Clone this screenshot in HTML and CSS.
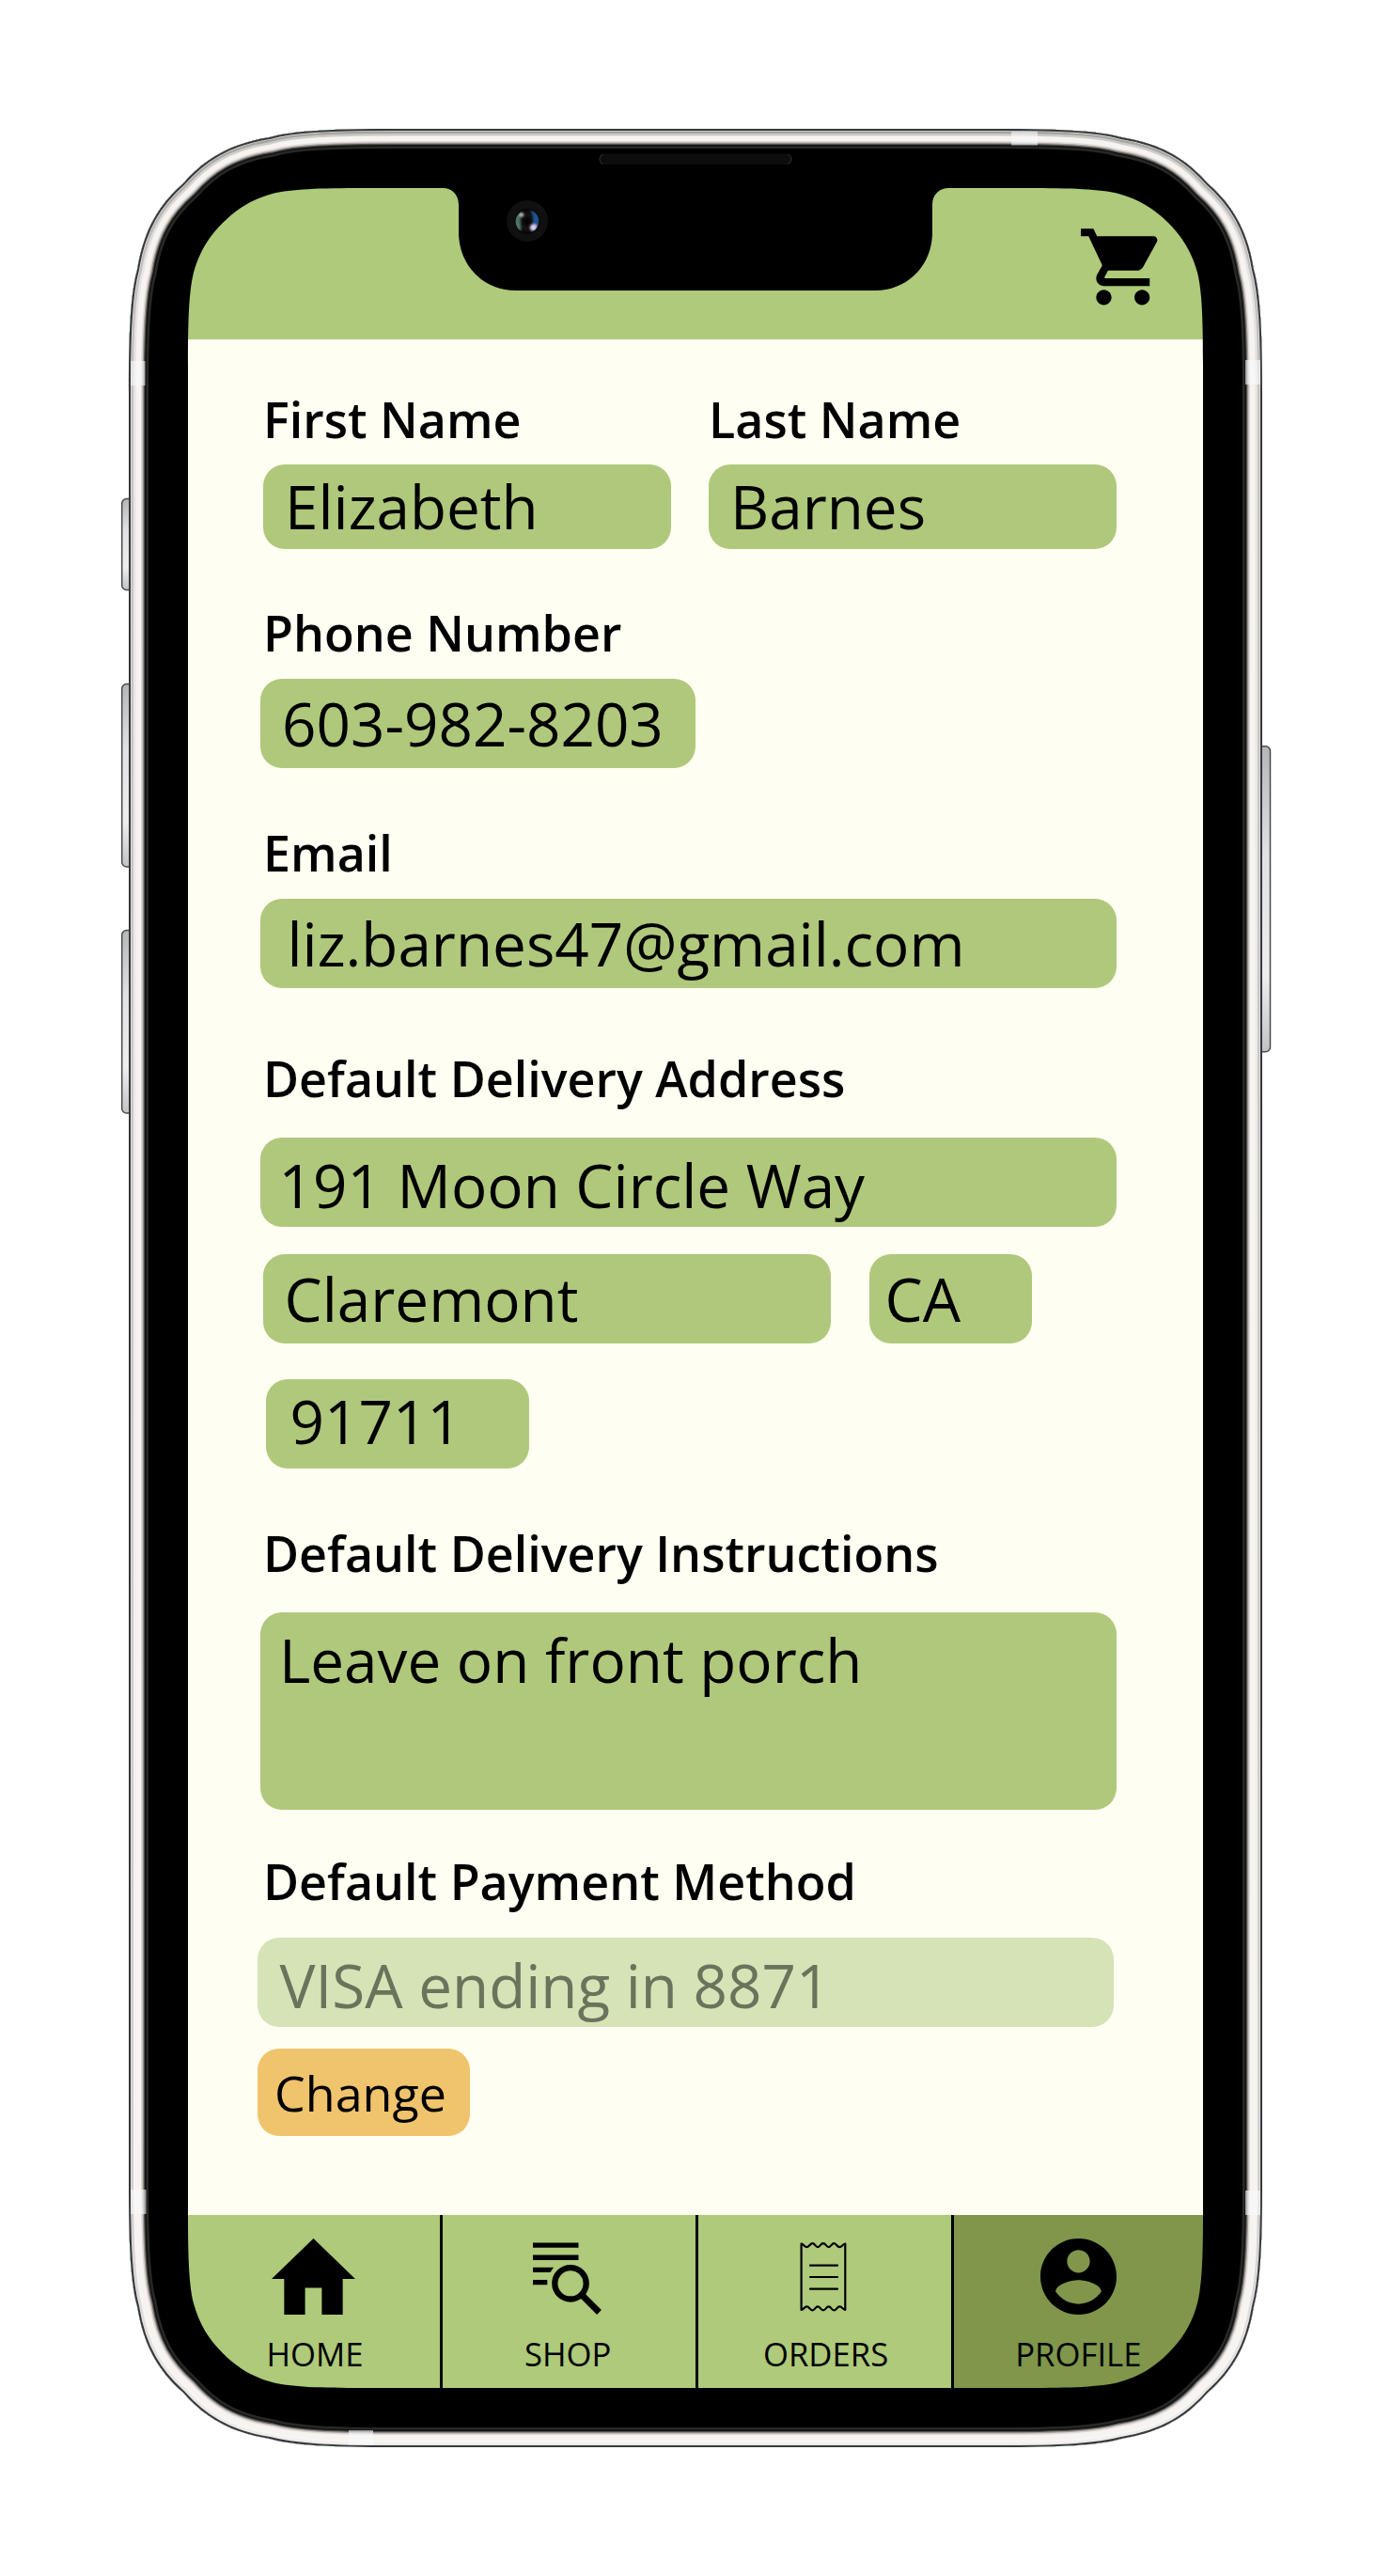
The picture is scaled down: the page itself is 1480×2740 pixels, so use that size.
FILE: index.html
```html
<!DOCTYPE html>
<html lang="en">
<head>
<meta charset="utf-8">
<title>Profile</title>
<link rel="stylesheet" href="styles.css">
</head>
<body>
<div class="device">
  <main class="screen">
    <header class="topbar">
      <svg class="cart" viewBox="0 0 24 24" aria-label="Cart"><path d="M7 18c-1.1 0-1.99.9-1.99 2S5.900 22 7 22s2-.9 2-2-.9-2-2-2zM1 2v2h2l3.600 7.590-1.350 2.450c-.16.28-.25.61-.25.96 0 1.100.9 2 2 2h12v-2H7.420c-.14 0-.25-.11-.25-.25l.03-.12.900-1.630h7.450c.75 0 1.410-.41 1.750-1.030l3.580-6.490c.08-.14.12-.31.12-.48 0-.55-.45-1-1-1H5.210l-.94-2H1zm16 16c-1.100 0-1.990.9-1.990 2s.89 2 1.990 2 2-.9 2-2-.9-2-2-2z"/></svg>
    </header>

    <form class="form">
      <div class="names">
        <div>
          <div class="label">First Name</div>
          <div class="field field-name">Elizabeth</div>
        </div>
        <div>
          <div class="label">Last Name</div>
          <div class="field field-name">Barnes</div>
        </div>
      </div>

      <div class="label label-phone">Phone Number</div>
      <div class="field field-phone">603-982-8203</div>

      <div class="label label-email">Email</div>
      <div class="field field-email">liz.barnes47@gmail.com</div>

      <div class="label label-address">Default Delivery Address</div>
      <div class="field field-street">191 Moon Circle Way</div>
      <div class="city-row">
        <div class="field field-city">Claremont</div>
        <div class="field field-state">CA</div>
      </div>
      <div class="field field-zip">91711</div>

      <div class="label label-notes">Default Delivery Instructions</div>
      <div class="field field-notes">Leave on front porch</div>

      <div class="label label-payment">Default Payment Method</div>
      <div class="field field-payment">VISA ending in 8871</div>
      <button type="button" class="change">Change</button>
    </form>

    <nav class="tabs">
      <a class="tab tab-home">
        <svg class="icon icon-home" viewBox="2 3 20 17" preserveAspectRatio="none"><path d="M10 20v-6h4v6h5v-8h3L12 3 2 12h3v8z"/></svg>
        <span>HOME</span>
      </a>
      <a class="tab tab-shop">
        <svg class="icon icon-shop" viewBox="0 0 74 81">
          <path d="M0 4.500h48.500v5.300H0zM0 17.500h48.500v5.400H0zM0 30.800h22l-3.500 5.300H0zM0 44h15.300v5.200H0z"/>
          <circle cx="40" cy="47.800" r="16.700" fill="none" stroke="#000" stroke-width="6.300"/>
          <path d="M52 60L70.500 78.500" fill="none" stroke="#000" stroke-width="6.800"/>
        </svg>
        <span>SHOP</span>
      </a>
      <a class="tab tab-orders">
        <svg class="icon icon-orders" viewBox="0 0 50 81" fill="none" stroke="#000" stroke-width="2.200" stroke-linecap="round" stroke-linejoin="round">
          <path d="M1.600 5.500c3 1 3.200 3.600 5.900 3.600s3.500-4 6-4 3.200 4 5.600 4 3.200-4 5.800-4 3.400 4 5.800 4 3.200-4 5.600-4 3.200 4 6 4S44.600 6.500 48.300 5.500V76c-3.400-1-3.500-3.600-6-3.600s-3.600 4-6 4-3.200-4-5.600-4-3.400 4-5.800 4-3.400-4-5.800-4-3.200 4-5.600 4-3.500-4-6-4S4.800 75 1.600 76z"/>
          <path d="M11 28.700h29M11 41h29M11 53.700h29"/>
        </svg>
        <span>ORDERS</span>
      </a>
      <a class="tab tab-profile">
        <svg class="icon icon-profile" viewBox="2 2 20 20"><path d="M12 2C6.480 2 2 6.480 2 12s4.480 10 10 10 10-4.480 10-10S17.520 2 12 2zm0 3c1.660 0 3 1.340 3 3s-1.340 3-3 3-3-1.340-3-3 1.340-3 3-3zm0 14.200c-2.500 0-4.710-1.280-6-3.220.03-1.990 4-3.080 6-3.080 1.990 0 5.970 1.090 6 3.080-1.290 1.940-3.500 3.220-6 3.220z"/></svg>
        <span>PROFILE</span>
      </a>
    </nav>
  </main>

  <svg class="shell" viewBox="0 0 1480 2740" aria-hidden="true">
    <defs>
      <path id="body" d="M137 420C137 352 139 312 146 287C153 243 170 217 195 195C217 170 243 153 287 146C312 139 352 137 420 137H1060C1128 137 1168 139 1193 146C1237 153 1263 170 1285 195C1310 217 1327 243 1334 287C1341 312 1343 352 1343 420V2320C1343 2388 1341 2428 1334 2453C1327 2497 1310 2523 1285 2545C1263 2570 1237 2587 1193 2594C1168 2601 1128 2603 1060 2603H420C352 2603 312 2601 287 2594C243 2587 217 2570 195 2545C170 2523 153 2497 146 2453C139 2428 137 2388 137 2320Z"/>
      <path id="glass" d="M200 387C200 340 201 310 206 290C212 268 222 252 237 237C252 222 268 212 290 206C310 201 340 200 387 200H471C481 200 488 207 488 218V247C488 282 514 309 549 309H931C966 309 992 282 992 247V218C992 207 999 200 1010 200H1093C1140 200 1170 201 1190 206C1212 212 1228 222 1243 237C1258 252 1268 268 1274 290C1279 310 1280 340 1280 387V2353C1280 2400 1279 2430 1274 2450C1268 2472 1258 2488 1243 2503C1228 2518 1212 2528 1190 2534C1170 2539 1140 2540 1093 2540H387C340 2540 310 2539 290 2534C268 2528 252 2518 237 2503C222 2488 212 2472 206 2450C201 2430 200 2400 200 2353Z"/>
      <clipPath id="bodyClip"><use href="#body"/></clipPath>
      <mask id="hole" maskUnits="userSpaceOnUse" x="0" y="0" width="1480" height="2740">
        <rect width="1480" height="2740" fill="#fff"/>
        <use href="#glass" fill="#000"/>
      </mask>
      <linearGradient id="edge" gradientUnits="userSpaceOnUse" x1="0" y1="137" x2="0" y2="2603">
        <stop offset="0" stop-color="#a3a39e"/><stop offset=".06" stop-color="#c5c1c0"/><stop offset=".9" stop-color="#d2cecf"/><stop offset="1" stop-color="#f1efec"/>
      </linearGradient>
      <linearGradient id="edge2" gradientUnits="userSpaceOnUse" x1="0" y1="137" x2="0" y2="2603">
        <stop offset="0" stop-color="#ccc9c5"/><stop offset=".06" stop-color="#e6e3e2"/><stop offset="1" stop-color="#f8f5f2"/>
      </linearGradient>
      <linearGradient id="key" x1="0" y1="0" x2="0" y2="1">
        <stop offset="0" stop-color="#b5b6b8"/><stop offset=".35" stop-color="#e0e1e2"/><stop offset=".75" stop-color="#eeeeef"/><stop offset="1" stop-color="#c2c3c5"/>
      </linearGradient>
      <radialGradient id="lens"><stop offset="0" stop-color="#000"/><stop offset=".55" stop-color="#161314"/><stop offset="1" stop-color="#040404"/></radialGradient>
      <clipPath id="lensClip"><circle cx="561" cy="235.500" r="12.500"/></clipPath>
      <filter id="soft"><feGaussianBlur stdDeviation="1"/></filter>
    </defs>

    <g fill="url(#key)" stroke="#4a4b4d" stroke-width="1.500">
      <rect x="129.700" y="530.500" width="16" height="97" rx="5"/>
      <rect x="129.700" y="727.500" width="16" height="194.500" rx="5"/>
      <rect x="129.700" y="989.500" width="16" height="194.500" rx="5"/>
      <rect x="1335" y="793.700" width="16.500" height="325" rx="5"/>
    </g>

    <g mask="url(#hole)">
      <use href="#body" fill="#000"/>
      <g clip-path="url(#bodyClip)" fill="none">
        <use href="#body" stroke="#272927" stroke-width="42"/>
        <use href="#body" stroke="#111211" stroke-width="37"/>
        <use href="#body" stroke="#595551" stroke-width="34"/>
        <use href="#body" stroke="#a7a19d" stroke-width="31.500"/>
        <use href="#body" stroke="#dfd8d4" stroke-width="29"/>
        <use href="#body" stroke="#f6f3f1" stroke-width="26"/>
        <use href="#body" stroke="url(#edge2)" stroke-width="15"/>
        <use href="#body" stroke="url(#edge)" stroke-width="10"/>
        <use href="#body" stroke="#e6e5e5" stroke-width="5.200"/>
        <use href="#body" stroke="#36393c" stroke-width="4"/>
      </g>
      <g fill="#fafafb" fill-opacity=".6">
        <path d="M139 384h15.500v26H139zM1325 383h16v26h-16zM139 2329h16.500v26H139zM1325 2330h16v26h-16zM1076 140h28v14.500h-28zM371 2585h26v15.500h-26z"/>
      </g>
    </g>

    <rect x="637.500" y="163.500" width="205" height="11.500" rx="5.700" fill="#0d0d0d"/>
    <path d="M642 164q-4 1-4 5.300t4 5.200M838 164q4 1 4 5.300t-4 5.200" fill="none" stroke="#2e2e2e"/>
    <circle cx="561" cy="235" r="22" fill="#101010"/>
    <circle cx="561" cy="235.500" r="13.500" fill="url(#lens)"/>
    <g clip-path="url(#lensClip)" filter="url(#soft)">
      <path d="M555 225q-8 3-8 12t7 9q1-3 0-8t1-13z" fill="#4d7563"/>
      <path d="M564 223q4 6 3 14l-2 9q8-1 9-11t-10-12z" fill="#1c5490"/>
      <circle cx="555" cy="228.500" r="2.300" fill="#b3c5bd"/>
      <circle cx="567.500" cy="242" r="3.600" fill="#d5cff0"/>
    </g>
  </svg>
</div>
</body>
</html>
```

FILE: styles.css
```css
* { box-sizing: border-box; }

body {
  margin: 0;
  background: #fff;
  color: #000;
  font-family: "Open Sans", "Noto Sans", sans-serif;
}

.device {
  position: relative;
  width: 1480px;
  height: 2740px;
  padding: 200px;
}

/* Phone casing, drawn over the edges of the screen */
.shell {
  position: absolute;
  top: 0;
  left: 0;
  width: 1480px;
  height: 2740px;
  pointer-events: none;
}

.screen {
  display: flex;
  flex-direction: column;
  width: 1080px;
  height: 2340px;
  background: #fefff2;
}

.topbar {
  display: flex;
  justify-content: flex-end;
  height: 161px;
  padding: 35px 36.5px 0 0;
  background: #aeca7a;
}

.cart {
  width: 97.6px;
  height: 97.6px;
}

.form {
  flex: 1;
  display: flex;
  flex-direction: column;
  align-items: flex-start;
  padding: 58.5px 92px 0 80px;
}

.names {
  display: flex;
  gap: 40px;
}

.label {
  font-size: 52px;
  font-weight: 600;
  line-height: 52px;
  white-space: nowrap;
}

.field {
  height: 95px;
  border-radius: 23px;
  background: #b0c87c;
  font-size: 63.8px;
  line-height: 95px;
  white-space: nowrap;
}

.field-name {
  width: 434px;
  height: 89.5px;
  margin-top: 22.5px;
  padding-left: 23px;
  line-height: 90px;
}

.label-phone { margin-top: 63.5px; }
.field-phone {
  width: 463px;
  margin: 23px 0 0 -3px;
  padding-left: 23px;
}

.label-email { margin-top: 64px; }
.field-email {
  width: 911px;
  margin: 23px 0 0 -3px;
  padding-left: 28.5px;
}

.label-address { margin-top: 69.5px; }
.field-street {
  width: 911px;
  margin: 37.5px 0 0 -3px;
  padding: 2.5px 0 0 19.5px;
}

.city-row {
  display: flex;
  gap: 40.5px;
  margin-top: 29px;
}
.field-city { width: 604px; padding-left: 22.5px; }
.field-state { width: 173px; padding-left: 17px; }

.field-zip {
  width: 280px;
  margin: 37.5px 0 0 3px;
  padding-left: 25.5px;
  line-height: 89px;
}

.label-notes { margin-top: 64px; }
.field-notes {
  width: 911px;
  height: 210.5px;
  margin: 37px 0 0 -3px;
  padding: 3px 0 0 20px;
}

.label-payment { margin-top: 49.5px; }
.field-payment {
  width: 911px;
  margin: 34.5px 0 0 -6px;
  padding: 2.5px 0 0 23.5px;
  background: #d5e3b7;
  color: #6a735b;
}

.change {
  width: 226px;
  height: 92.5px;
  margin: 23px 0 0 -6px;
  padding: 0 0 0 18px;
  border: 0;
  border-radius: 23px;
  background: #f0c46d;
  color: #000;
  font: 52px/93px "Open Sans", "Noto Sans", sans-serif;
  text-align: left;
}

.tabs {
  display: grid;
  grid-template-columns: 271px 271.5px 272.2px 265.3px;
  height: 184.5px;
  background: #aeca7a;
}

.tab {
  display: flex;
  flex-direction: column;
  align-items: center;
  padding-top: 25.5px;
  border-right: 3px solid #000;
  font-size: 34.7px;
  line-height: 40px;
}
.tab span { margin-top: 21.7px; }
.tab-home span { margin-left: 2px; }
.tab-shop span { margin-right: 2px; }
.tab-orders span { margin-left: 3px; }
.tab-profile {
  border-right: 0;
  background: #7f964b;
}

.icon { display: block; height: 81px; }
.icon-home { width: 89px; margin-right: 1px; }
.icon-shop { width: 74px; margin-right: 3px; }
.icon-orders { width: 50px; margin-right: 2px; }
.icon-profile { width: 81px; }
```
